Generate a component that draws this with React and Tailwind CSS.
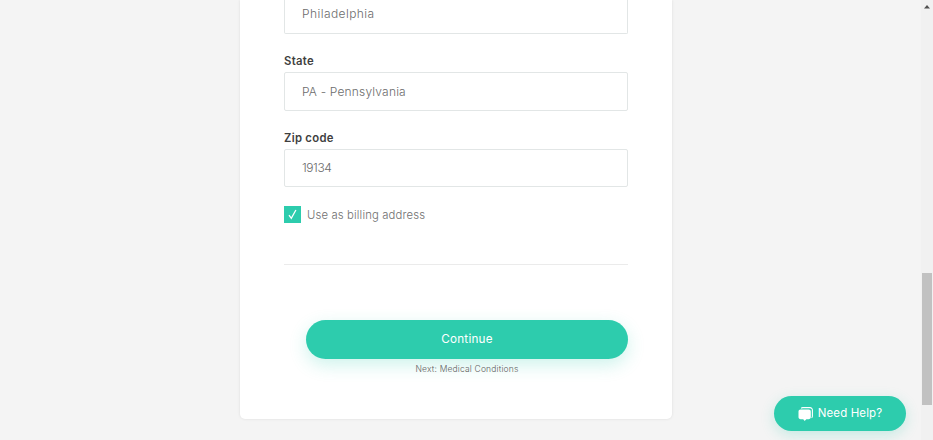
import { useState } from "react";
import clsx from "clsx";

function Field({ label, value, onChange, className }) {
  return (
    <div className="flex flex-col">
      <label className="h-[18px] text-[11.3px] leading-[18px] font-semibold text-[#3f3f3f] tracking-[0.025em]">
        {label}
      </label>
      <input
        value={value}
        onChange={(e) => onChange(e.target.value)}
        className={clsx(
          "mt-[2px] h-[38.5px] w-full rounded-[2px] border border-[#e2e6e6] bg-white px-[17px] text-[12px] font-light text-[#6c6c6c] outline-none",
          className,
        )}
      />
    </div>
  );
}

function ChatIcon() {
  return (
    <svg width="15" height="15" viewBox="0 0 15 15" fill="none">
      <path
        d="M3.2 1.3C3.6.8 4.1.6 4.7.6H12a2.4 2.4 0 0 1 2.4 2.4v6.2c0 .7-.3 1.2-.8 1.6"
        stroke="#fff"
        strokeWidth="1.1"
      />
      <path
        d="M2.6 2.4h8.1c1.3 0 2.1.9 2.1 2.1v5.6c0 1.3-.9 2.1-2.1 2.1H8.3l-1.6 1.9-1.5-1.9H2.6C1.3 12.2.5 11.4.5 10.1V4.5c0-1.3.8-2.1 2.1-2.1Z"
        fill="#fff"
      />
    </svg>
  );
}

export default function App() {
  const [city, setCity] = useState("Philadelphia");
  const [state, setState] = useState("PA - Pennsylvania");
  const [zip, setZip] = useState("19134");
  const [billing, setBilling] = useState(true);

  return (
    <div className="relative flex h-[440px] w-full overflow-hidden bg-[#f4f4f4] font-[Inter,sans-serif]">
      <main className="flex flex-1 items-start justify-center pr-[9px]">
        <div className="flex h-[419px] w-[432px] flex-col rounded-b-[5px] bg-white px-[44px] shadow-[0_0_3px_rgba(0,0,0,0.1)]">
          {/* City, scrolled partly out of view */}
          <input
            value={city}
            onChange={(e) => setCity(e.target.value)}
            className="h-[33.5px] shrink-0 rounded-b-[2px] border border-t-0 border-[#e2e6e6] px-[17px] pb-[6px] text-[12px] font-light tracking-[0.035em] text-[#6c6c6c] outline-none"
          />

          <div className="mt-[18.5px] flex flex-col gap-[18px]">
            <Field
              label="State"
              value={state}
              onChange={setState}
              className="tracking-[0.015em]"
            />
            <Field
              label="Zip code"
              value={zip}
              onChange={setZip}
              className="tracking-[-0.035em]"
            />
          </div>

          <button
            type="button"
            onClick={() => setBilling(!billing)}
            className="mt-[19px] flex h-[17px] items-center gap-[6px] text-left"
          >
            <span className="flex size-[17px] items-center justify-center bg-[#2dccad]">
              {billing && (
                <svg width="9" height="11" viewBox="0 0 9 11" fill="none">
                  <path d="M1 6.2 3.3 9.4 7.9 1" stroke="#fff" strokeWidth="1.3" />
                </svg>
              )}
            </span>
            <span className="pt-px text-[11.3px] font-light tracking-[0.013em] text-[#707070]">
              Use as billing address
            </span>
          </button>

          <hr className="mt-[41px] border-[#ebebeb]" />

          <div className="mt-[55px] ml-[22px] flex flex-col items-center">
            <button
              type="button"
              className="h-[39px] w-full rounded-full bg-[#2dccad] pt-px text-[11.7px] font-normal tracking-[0.02em] text-white shadow-[0_6px_17px_rgba(45,204,173,0.23)]"
            >
              Continue
            </button>
            <p className="mt-[3px] text-[8.5px] leading-[15px] font-light tracking-[0.02em] text-[#606060]">
              Next: Medical Conditions
            </p>
          </div>
        </div>
      </main>

      {/* Scrollbar */}
      <div className="flex w-[12px] flex-col items-center bg-[#f1f1f1]">
        <svg width="6" height="4" viewBox="0 0 6 4" className="mt-[5px]">
          <path d="M3 0 6 3.5H0Z" fill="#505050" />
        </svg>
        <div className="mt-[264px] h-[132px] w-[10px] bg-[#c1c1c1]" />
      </div>

      {/* Floating help button */}
      <button
        type="button"
        className="absolute right-[27px] bottom-[9px] flex h-[35px] w-[132px] items-center justify-center gap-[5px] rounded-full bg-[#2dccad] pt-px text-[11.5px] font-normal tracking-[0.01em] text-white shadow-[0_4px_14px_rgba(45,204,173,0.23)]"
      >
        <ChatIcon />
        Need Help?
      </button>
    </div>
  );
}
